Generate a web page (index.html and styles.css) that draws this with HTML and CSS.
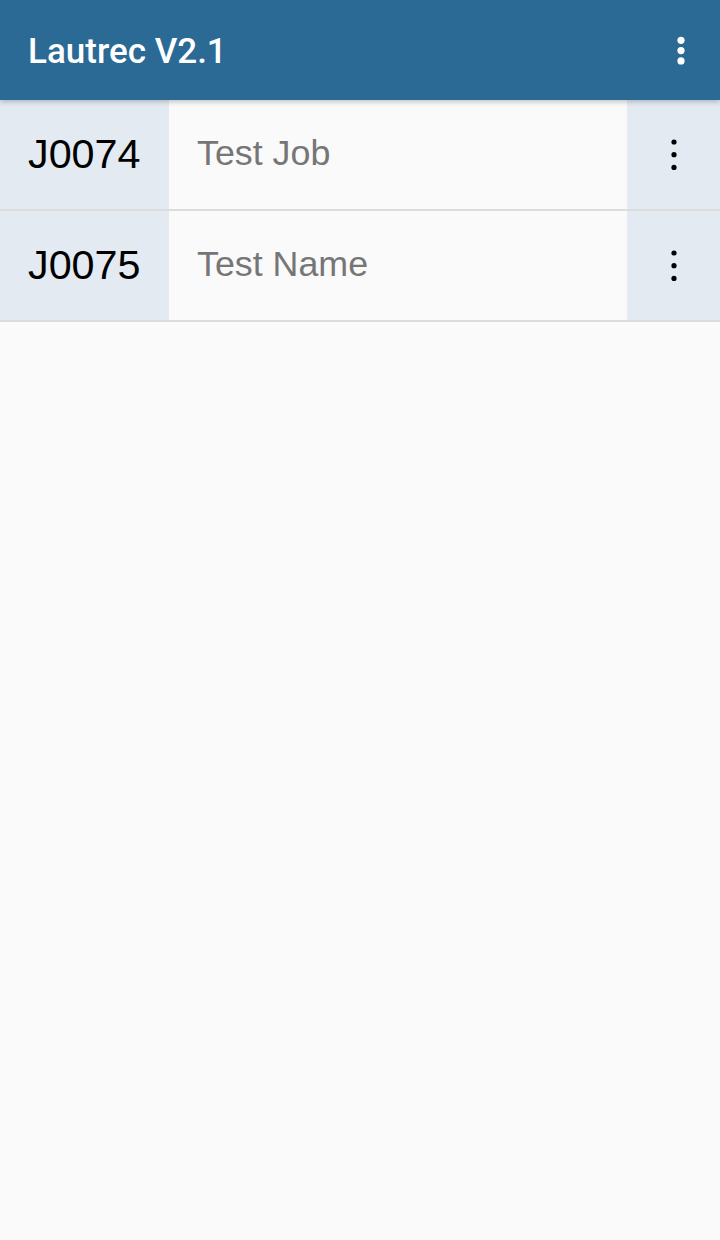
FILE: index.html
```html
<!DOCTYPE html>
<html>
<head>
<meta charset="utf-8">
<link rel="stylesheet" href="styles.css">
</head>
<body>
<header class="appbar">
  <div class="title">Lautrec V2.1</div>
  <svg class="menu" width="8" height="30" viewBox="0 0 8 30">
    <circle cx="4" cy="4.3" r="3.6" fill="#fff"/>
    <circle cx="4" cy="14.6" r="3.6" fill="#fff"/>
    <circle cx="4" cy="24.9" r="3.6" fill="#fff"/>
  </svg>
</header>
<main class="list">
  <div class="row">
    <div class="code">J0074</div>
    <div class="name">Test Job</div>
    <div class="more">
      <svg width="6" height="32" viewBox="0 0 6 32">
        <circle cx="3" cy="3" r="2.6" fill="#000"/>
        <circle cx="3" cy="15.7" r="2.6" fill="#000"/>
        <circle cx="3" cy="28.4" r="2.6" fill="#000"/>
      </svg>
    </div>
  </div>
  <div class="row">
    <div class="code">J0075</div>
    <div class="name">Test Name</div>
    <div class="more">
      <svg width="6" height="32" viewBox="0 0 6 32">
        <circle cx="3" cy="3" r="2.6" fill="#000"/>
        <circle cx="3" cy="15.7" r="2.6" fill="#000"/>
        <circle cx="3" cy="28.4" r="2.6" fill="#000"/>
      </svg>
    </div>
  </div>
</main>
</body>
</html>
```
FILE: styles.css
```css
html, body {
  margin: 0;
  padding: 0;
  background: #fafafa;
  height: 100%;
}
body {
  font-family: "Liberation Sans", Arial, sans-serif;
}
.appbar {
  position: relative;
  z-index: 2;
  height: 100px;
  background: #2b6a95;
  display: flex;
  align-items: center;
  justify-content: space-between;
  padding: 0 35px 0 28px;
  box-shadow: 0 2px 5px rgba(0, 0, 0, 0.22);
}
.title {
  font-family: Roboto, "Noto Sans", sans-serif;
  font-weight: 500;
  font-size: 35px;
  color: #ffffff;
  margin-top: 2px;
}
.menu {
  display: block;
  margin-top: 1px;
}
.list {
  display: flex;
  flex-direction: column;
}
.row {
  display: grid;
  grid-template-columns: 169px 1fr 93px;
  height: 109px;
  border-bottom: 2px solid #dcdcdc;
}
.code {
  background: #e4eaf1;
  display: flex;
  align-items: center;
  padding-left: 28px;
  font-size: 41.3px;
  color: #000;
}
.name {
  background: #fafafa;
  display: flex;
  align-items: center;
  padding-left: 28px;
  font-size: 35.8px;
  color: #767676;
  padding-bottom: 3px;
}
.more {
  background: #e4eaf1;
  display: flex;
  align-items: center;
  justify-content: center;
}
.more svg {
  display: block;
}
```
